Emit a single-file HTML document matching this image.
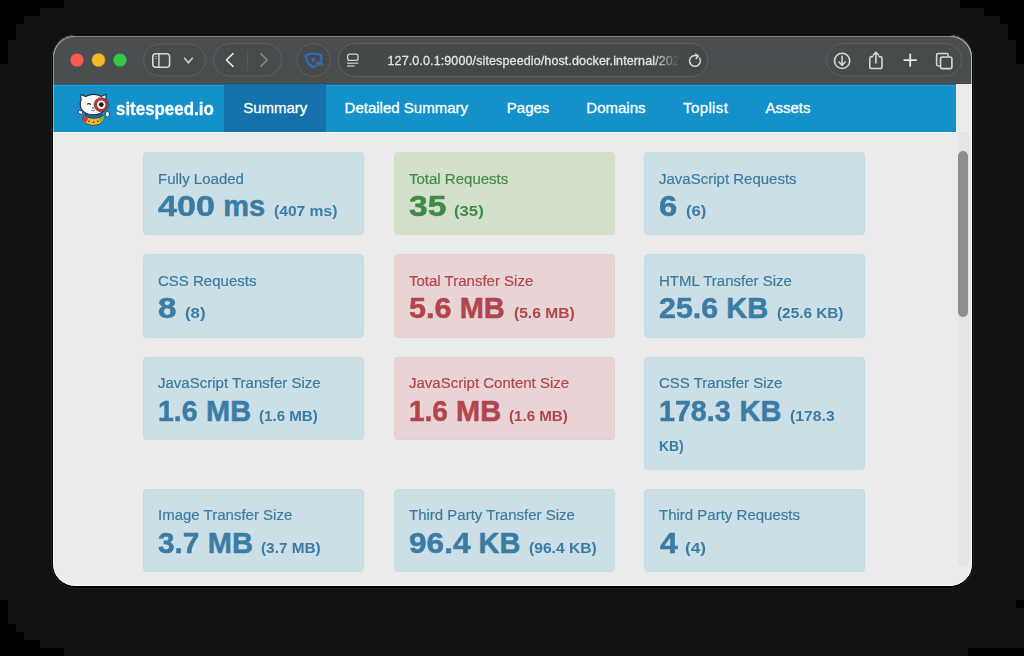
<!DOCTYPE html>
<html><head><meta charset="utf-8">
<style>
*{box-sizing:border-box;margin:0;padding:0}
html,body{width:1024px;height:656px;overflow:hidden;background:#121212;font-family:"Liberation Sans",sans-serif}
.blk{position:absolute;background:#000}
#win{position:absolute;left:52px;top:33.5px;width:921px;height:554.5px;border-radius:24px;background:#000;box-shadow:0 0 0 .6px #2a2a2c}
#inner{position:absolute;left:1px;top:1.5px;right:1px;bottom:2px;border-radius:22px;overflow:hidden;background:#ebebeb}
#tb{position:absolute;left:0;top:0;right:0;height:49px;background:linear-gradient(#1a1a1a,#1a1a1a .5px,#4c4e50 .6px,#4a4e4f 46.4px,#57504c 47px,#564c48 48px,#3a4a52 48.5px)}
#edge{position:absolute;left:0;top:.5px;right:0;bottom:0;border-radius:22px;box-shadow:inset 0 1px 0 rgba(255,255,255,.28),inset 0 -1px 0 rgba(255,255,255,.7),inset 1px 0 0 rgba(255,255,255,.4),inset -1px 0 0 rgba(255,255,255,.6);pointer-events:none}
#nav{position:absolute;left:0;top:49px;width:903px;height:47.5px;box-shadow:0 1px 0 rgba(255,255,255,.5);background:linear-gradient(#2a6a90,#2a6a90 .6px,#2398d6 1.2px,#2096d3 2px,#1391c8 3px)}
#track{position:absolute;left:905px;top:97px;width:11px;height:434px;border-radius:0 0 5px 5px;background:#e5e5e5}
#thumb{position:absolute;left:905px;top:116px;width:10px;height:166px;border-radius:5px;background:#8d8d8d}
.pill{position:absolute;border:1px solid rgba(255,255,255,.12);border-radius:17px;background:rgba(0,0,0,.04)}
.dot{position:absolute;width:13px;height:13px;border-radius:50%}
.box{position:absolute;width:221px;height:83px;border:1px solid #c3dde7;border-radius:4px;background:#cddfe6}
.box.g{background:#d3e1cc;border-color:#cde3c3}
.box.r{background:#e8d3d5;border-color:#e6cdd0}
.t{position:absolute;white-space:nowrap;transform-origin:0 0}
.b{color:#3b7ca5}.gt{color:#3e8a48}.rt{color:#b2454b}.lab.b{color:#3a7b9c}
.lab{font-size:15.5px;line-height:18px;-webkit-text-stroke:.2px currentColor;transform:scaleX(.968)}
.val{font-size:29px;line-height:34px;font-weight:bold;-webkit-text-stroke:.5px currentColor}
.sm{font-size:15px;line-height:18px;font-weight:bold}
.nv{color:#fff;font-size:15px;line-height:18px;-webkit-text-stroke:.3px #fff}
#act{position:absolute;left:223.5px;top:84px;width:102px;height:47.5px;background:#1471ab}
#url{position:absolute;left:387.5px;top:53px;width:292px;height:16px;line-height:16px;font-size:12.5px;color:#e4e4e4;letter-spacing:.12px;-webkit-text-stroke:.3px #e4e4e4;white-space:nowrap;overflow:hidden;-webkit-mask-image:linear-gradient(to right,#000 265px,transparent 292px)}
</style></head><body>
<!-- corner stair blocks -->
<div class="blk" style="left:0;top:0;width:64px;height:8px"></div>
<div class="blk" style="left:0;top:8px;width:40px;height:8px"></div>
<div class="blk" style="left:0;top:16px;width:24px;height:8px"></div>
<div class="blk" style="left:0;top:24px;width:16px;height:16px"></div>
<div class="blk" style="left:0;top:40px;width:8px;height:24px"></div>
<div class="blk" style="left:960px;top:0;width:64px;height:8px"></div>
<div class="blk" style="left:984px;top:8px;width:40px;height:8px"></div>
<div class="blk" style="left:1000px;top:16px;width:24px;height:8px"></div>
<div class="blk" style="left:1008px;top:24px;width:16px;height:16px"></div>
<div class="blk" style="left:1016px;top:40px;width:8px;height:24px"></div>
<div class="blk" style="left:0;top:600px;width:8px;height:24px"></div>
<div class="blk" style="left:0;top:624px;width:16px;height:8px"></div>
<div class="blk" style="left:0;top:632px;width:24px;height:8px"></div>
<div class="blk" style="left:0;top:640px;width:40px;height:8px"></div>
<div class="blk" style="left:0;top:648px;width:64px;height:8px"></div>
<div class="blk" style="left:1016px;top:600px;width:8px;height:8px"></div>
<div class="blk" style="left:968px;top:648px;width:56px;height:8px"></div>

<div id="win"><div id="inner">
  <div id="tb"></div>
  <div id="nav"></div>
  <div id="track"></div>
  <div id="thumb"></div>
  <div id="edge"></div>
</div></div>


<div id="navl">
<div id="act"></div><svg width="1024" height="656" style="position:absolute;left:0;top:0">
 <g>
  <path d="M83 115.5 Q82 121 86 123.5 Q92 127 99 124.5 Q104.5 121.5 104.2 115.5 Q94 120 83 115.5Z" fill="#f0b82a" stroke="#243a52" stroke-width=".7"/>
  <path d="M82.6 115.3 Q82.2 120.5 85.8 122.6 L88.2 118.2 Q85 117.2 82.6 115.3Z" fill="#e0342a"/>
  <path d="M104.4 115.3 Q104.6 120.4 100.8 122.6 L98.6 118.2 Q102 117.2 104.4 115.3Z" fill="#78b83a"/>
  <circle cx="89" cy="121.3" r=".8" fill="#222"/><circle cx="93.5" cy="122.3" r=".8" fill="#222"/><circle cx="98" cy="121.3" r=".8" fill="#222"/>
  <path d="M85 114 Q93.5 118.5 102.5 114 L101 117 Q93.5 120 86.5 117Z" fill="#2d6cae" stroke="#13324f" stroke-width=".7"/>
  <path d="M81.2 99.5 Q80.2 96.5 80.9 94.6 Q83.5 95.2 85.5 96.6 Q93.5 92.3 101.5 96.4 Q103.6 95 105.9 94.6 Q106.5 97 105.6 99.8 Q107.6 104 105.8 108.5 Q101.5 114.8 93.2 114.8 Q84.8 114.8 81.2 108.8 Q79.2 104 81.2 99.5Z" fill="#f8f8fa" stroke="#1f2c3a" stroke-width="1.1"/>
  <path d="M87 104.4 Q89 102.8 91 104.6" stroke="#2a2a2a" stroke-width="1.2" fill="none"/>
  <path d="M91.8 107.6 L94 107.6 L92.9 109Z" fill="#2a2a2a"/>
  <path d="M91 110.3 Q92.9 111.6 94.8 110.3" stroke="#555" stroke-width=".7" fill="none"/>
  <circle cx="101.2" cy="104.7" r="5.6" fill="#fff" stroke="#b2392f" stroke-width="2.8"/>
  <circle cx="101.2" cy="104.7" r="7.1" fill="none" stroke="#5a1f1a" stroke-width=".6"/>
  <circle cx="101.3" cy="104.6" r="2.4" fill="#141414"/>
  <ellipse cx="80.6" cy="112.4" rx="2.3" ry="1.7" fill="#fff" stroke="#1f2c3a" stroke-width=".8" transform="rotate(25 80.6 112.4)"/>
  <ellipse cx="107.3" cy="114.2" rx="2.1" ry="2.8" fill="#fff" stroke="#1f2c3a" stroke-width=".8"/>
 </g>
</svg>

<div class="t nv" style="left:116px;top:98px;font-size:19px;font-weight:bold;line-height:22px;transform:scaleX(.89)">sitespeed.io</div>
<div class="t nv" style="left:243.2px;top:98.8px">Summary</div>
<div class="t nv" style="left:344.6px;top:98.8px">Detailed Summary</div>
<div class="t nv" style="left:506.8px;top:98.8px">Pages</div>
<div class="t nv" style="left:586.3px;top:98.8px">Domains</div>
<div class="t nv" style="left:683px;top:98.8px;letter-spacing:.4px">Toplist</div>
<div class="t nv" style="left:765.5px;top:98.8px">Assets</div>
</div>
<div class="box " style="left:143.0px;top:152.2px;height:83.2px"></div>
<div class="t lab b" style="left:158.2px;top:169.7px">Fully Loaded</div>
<div class="t val b" style="left:158.2px;top:188.9px;transform:scaleX(1.177)">400</div>
<div class="t val b" style="left:223.2px;top:188.9px">ms</div>
<div class="t sm b" style="left:273.9px;top:202.0px;transform:scaleX(1.041)">(407 ms)</div>
<div class="box g" style="left:393.5px;top:152.2px;height:83.2px"></div>
<div class="t lab gt" style="left:408.7px;top:169.7px">Total Requests</div>
<div class="t val gt" style="left:408.8px;top:188.9px;transform:scaleX(1.159)">35</div>
<div class="t sm gt" style="left:453.7px;top:202.0px;transform:scaleX(1.115)">(35)</div>
<div class="box " style="left:644.0px;top:152.2px;height:83.2px"></div>
<div class="t lab b" style="left:659.2px;top:169.7px">JavaScript Requests</div>
<div class="t val b" style="left:658.8px;top:188.9px;transform:scaleX(1.131)">6</div>
<div class="t sm b" style="left:686.2px;top:202.0px;transform:scaleX(1.111)">(6)</div>
<div class="box " style="left:143.0px;top:254.4px;height:83.2px"></div>
<div class="t lab b" style="left:158.2px;top:271.9px">CSS Requests</div>
<div class="t val b" style="left:158.3px;top:291.1px;transform:scaleX(1.144)">8</div>
<div class="t sm b" style="left:185.2px;top:304.2px;transform:scaleX(1.122)">(8)</div>
<div class="box r" style="left:393.5px;top:254.4px;height:83.2px"></div>
<div class="t lab rt" style="left:408.7px;top:271.9px">Total Transfer Size</div>
<div class="t val rt" style="left:409.0px;top:291.1px;transform:scaleX(1.055)">5.6</div>
<div class="t val rt" style="left:459.7px;top:291.1px">MB</div>
<div class="t sm rt" style="left:514.0px;top:304.2px;transform:scaleX(1.040)">(5.6 MB)</div>
<div class="box " style="left:644.0px;top:254.4px;height:83.2px"></div>
<div class="t lab b" style="left:659.2px;top:271.9px">HTML Transfer Size</div>
<div class="t val b" style="left:659.0px;top:291.1px;transform:scaleX(1.048)">25.6</div>
<div class="t val b" style="left:726.2px;top:291.1px">KB</div>
<div class="t sm b" style="left:776.7px;top:304.2px;transform:scaleX(1.022)">(25.6 KB)</div>
<div class="box " style="left:143.0px;top:356.9px;height:83.2px"></div>
<div class="t lab b" style="left:158.2px;top:374.4px">JavaScript Transfer Size</div>
<div class="t val b" style="left:158.3px;top:393.6px;transform:scaleX(0.982)">1.6</div>
<div class="t val b" style="left:206.1px;top:393.6px">MB</div>
<div class="t sm b" style="left:259.1px;top:406.7px;transform:scaleX(1.007)">(1.6 MB)</div>
<div class="box r" style="left:393.5px;top:356.9px;height:83.2px"></div>
<div class="t lab rt" style="left:408.7px;top:374.4px">JavaScript Content Size</div>
<div class="t val rt" style="left:409.0px;top:393.6px;transform:scaleX(0.965)">1.6</div>
<div class="t val rt" style="left:456.1px;top:393.6px">MB</div>
<div class="t sm rt" style="left:509.1px;top:406.7px;transform:scaleX(1.007)">(1.6 MB)</div>
<div class="box " style="left:644.0px;top:356.9px;height:113.0px"></div>
<div class="t lab b" style="left:659.2px;top:374.4px">CSS Transfer Size</div>
<div class="t val b" style="left:659.0px;top:393.6px;transform:scaleX(0.988)">178.3</div>
<div class="t val b" style="left:739.6px;top:393.6px">KB</div>
<div class="t sm b" style="left:790.1px;top:406.7px;transform:scaleX(1.051)">(178.3</div>
<div class="t sm b" style="left:659.0px;top:436.9px;transform:scaleX(0.926)">KB)</div>
<div class="box " style="left:143.0px;top:488.9px;height:83.2px"></div>
<div class="t lab b" style="left:158.2px;top:506.4px">Image Transfer Size</div>
<div class="t val b" style="left:158.3px;top:525.6px;transform:scaleX(1.025)">3.7</div>
<div class="t val b" style="left:207.8px;top:525.6px">MB</div>
<div class="t sm b" style="left:260.8px;top:538.7px;transform:scaleX(1.024)">(3.7 MB)</div>
<div class="box " style="left:393.5px;top:488.9px;height:83.2px"></div>
<div class="t lab b" style="left:408.7px;top:506.4px">Third Party Transfer Size</div>
<div class="t val b" style="left:409.0px;top:525.6px;transform:scaleX(1.091)">96.4</div>
<div class="t val b" style="left:478.6px;top:525.6px">KB</div>
<div class="t sm b" style="left:529.2px;top:538.7px;transform:scaleX(1.043)">(96.4 KB)</div>
<div class="box " style="left:644.0px;top:488.9px;height:83.2px"></div>
<div class="t lab b" style="left:659.2px;top:506.4px">Third Party Requests</div>
<div class="t val b" style="left:659.5px;top:525.6px;transform:scaleX(1.100)">4</div>
<div class="t sm b" style="left:685.2px;top:538.7px;transform:scaleX(1.150)">(4)</div>
<svg id="tbsvg" width="1024" height="656" viewBox="0 0 1024 656" style="position:absolute;left:0;top:0" fill="none">
  <circle cx="77" cy="60" r="6.6" fill="#f95d5b" stroke="#c8403f" stroke-width=".5"/>
  <circle cx="98.5" cy="60" r="6.6" fill="#f2bb2e" stroke="#c89420" stroke-width=".5"/>
  <circle cx="120" cy="60" r="6.6" fill="#3bc64a" stroke="#1f9a2c" stroke-width=".5"/>
  <rect x="143.5" y="44" width="62" height="32" rx="16" stroke="#5d6161" stroke-width="1" fill="#474b4c"/>
  <rect x="213.5" y="43.5" width="68" height="32.5" rx="16.25" stroke="#5d6161" stroke-width="1" fill="#474b4c"/>
  <circle cx="313.5" cy="60" r="16.5" stroke="#5d6161" stroke-width="1" fill="#474b4c"/>
  <rect x="338.5" y="43.5" width="369" height="33" rx="16.5" stroke="#5d6161" stroke-width="1" fill="#444849"/>
  <rect x="826.5" y="43.5" width="135" height="32.5" rx="16.25" stroke="#5d6161" stroke-width="1" fill="#474b4c"/>
  <!-- sidebar icon -->
  <rect x="152.8" y="53.8" width="16.8" height="13.4" rx="3" stroke="#d8d8d8" stroke-width="1.6"/>
  <line x1="158.9" y1="54" x2="158.9" y2="67" stroke="#d8d8d8" stroke-width="1.5"/>
  <line x1="155.4" y1="56.5" x2="156.6" y2="56.5" stroke="#bbb" stroke-width="1"/>
  <line x1="155.4" y1="58.5" x2="156.6" y2="58.5" stroke="#bbb" stroke-width="1"/>
  <path d="M184.6 58.2 L188.4 62.8 L192.2 58.2" stroke="#d0d0d0" stroke-width="1.6" stroke-linecap="round" stroke-linejoin="round"/>
  <!-- back/fwd -->
  <path d="M233 53.6 L226.4 60 L233 66.4" stroke="#e6e6e6" stroke-width="1.7" stroke-linecap="round" stroke-linejoin="round"/>
  <path d="M260.8 53.8 L267.2 60 L260.8 66.2" stroke="#8c8d8d" stroke-width="1.5" stroke-linecap="round" stroke-linejoin="round"/>
  <line x1="247.5" y1="51" x2="247.5" y2="71" stroke="#555656" stroke-width="1"/>
  <!-- extension shield -->
  <path d="M305.9 55.2 Q313.5 51.6 321.2 55.2 L321.2 60.2 M305.9 55.2 Q305.6 63.2 313.2 67.2 L315.6 65.8" stroke="#2b70cc" stroke-width="2" stroke-linecap="round" stroke-linejoin="round" fill="none"/>
  <path d="M311.6 58.3 L313.2 62.2 L314.8 58.3Z" fill="#2b70cc" stroke="#2b70cc" stroke-width=".9"/>
  <path d="M316.4 66 L316.4 61.8 L322.6 61.8 L322.6 66 L321.1 66 L321.1 63.6 L320.2 63.6 L320.2 66 L318.8 66 L318.8 63.6 L317.9 63.6 L317.9 66Z" fill="#2b74d4"/>
  <!-- page icon -->
  <rect x="347.6" y="54.2" width="10.4" height="6.2" rx="2" stroke="#d0d0d0" stroke-width="1.3"/>
  <line x1="347" y1="63.2" x2="358.3" y2="63.2" stroke="#d0d0d0" stroke-width="1.2"/>
  <line x1="347" y1="66" x2="354.5" y2="66" stroke="#d0d0d0" stroke-width="1.2"/>
  <!-- reload -->
  <path d="M699.6 58.2 A5.4 5.4 0 1 1 697.2 56" stroke="#d6d6d6" stroke-width="1.5" stroke-linecap="round"/>
  <path d="M695.6 54 L698.4 56.1 L696.2 58.6" stroke="#d6d6d6" stroke-width="1.5" stroke-linecap="round" stroke-linejoin="round"/>
  <!-- download -->
  <circle cx="842.1" cy="60.9" r="7.6" stroke="#d8d8d8" stroke-width="1.6"/>
  <line x1="842.1" y1="56.3" x2="842.1" y2="65" stroke="#d8d8d8" stroke-width="1.5" stroke-linecap="round"/>
  <path d="M839 62 L842.1 65.1 L845.2 62" stroke="#d8d8d8" stroke-width="1.5" stroke-linecap="round" stroke-linejoin="round"/>
  <!-- share -->
  <path d="M872.6 56.6 L871.4 56.6 Q869.8 56.6 869.8 58.3 L869.8 66.8 Q869.8 68.5 871.5 68.5 L880.4 68.5 Q882 68.5 882 66.8 L882 58.3 Q882 56.6 880.4 56.6 L879.2 56.6" stroke="#d8d8d8" stroke-width="1.6" stroke-linecap="round"/>
  <line x1="875.9" y1="52.5" x2="875.9" y2="63" stroke="#d8d8d8" stroke-width="1.6" stroke-linecap="round"/>
  <path d="M873.3 55 L875.9 52.4 L878.5 55" stroke="#d8d8d8" stroke-width="1.6" stroke-linecap="round" stroke-linejoin="round"/>
  <!-- plus -->
  <line x1="904.3" y1="60.2" x2="916.1" y2="60.2" stroke="#e6e6e6" stroke-width="1.8" stroke-linecap="round"/>
  <line x1="910.2" y1="54.3" x2="910.2" y2="66.1" stroke="#e6e6e6" stroke-width="1.8" stroke-linecap="round"/>
  <!-- tabs -->
  <path d="M939.6 66 L938.3 66 Q936.6 66 936.6 64.3 L936.6 55.3 Q936.6 53.6 938.3 53.6 L946.5 53.6 Q948.2 53.6 948.2 55.3 L948.2 56.4" stroke="#d8d8d8" stroke-width="1.5"/>
  <rect x="940.5" y="57" width="11.4" height="11.6" rx="1.8" stroke="#d8d8d8" stroke-width="1.6"/>
</svg>
<div id="url">127.0.0.1:9000/sitespeedio/host.docker.internal/2023</div>
</body></html>
